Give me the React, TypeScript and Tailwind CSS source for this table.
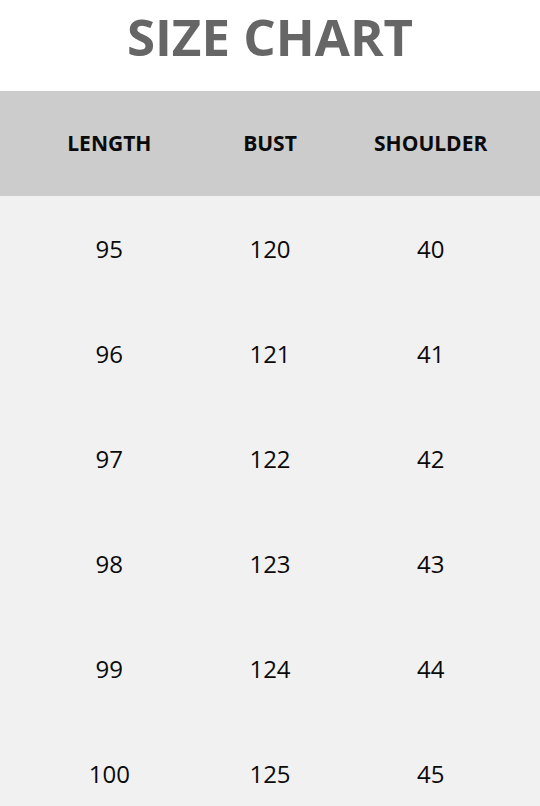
import React from "react";

const rows = [
  ["95", "120", "40"],
  ["96", "121", "41"],
  ["97", "122", "42"],
  ["98", "123", "43"],
  ["99", "124", "44"],
  ["100", "125", "45"],
];

export default function App() {
  return (
    <div
      className="w-[540px] h-[806px] overflow-hidden bg-white"
      style={{ fontFamily: '"Open Sans", "Noto Sans", sans-serif' }}
    >
      <div className="h-[91px] pt-[11px]">
        <h1 className="text-center text-[51px] leading-none font-bold text-[#666666]">
          SIZE CHART
        </h1>
      </div>
      <div className="bg-[#cccccc] h-[105px] grid grid-cols-3 px-[29px] items-center">
        {["LENGTH", "BUST", "SHOULDER"].map((h) => (
          <div key={h} className="text-center text-[21px] font-bold text-[#0a0a0a]">
            {h}
          </div>
        ))}
      </div>
      <div className="bg-[#f1f1f1]">
        {rows.map((r, i) => (
          <div key={i} className="h-[105px] grid grid-cols-3 px-[29px] items-center">
            {r.map((v, j) => (
              <div key={j} className="text-center text-[24px] text-[#0a0a0a]">
                {v}
              </div>
            ))}
          </div>
        ))}
      </div>
    </div>
  );
}
